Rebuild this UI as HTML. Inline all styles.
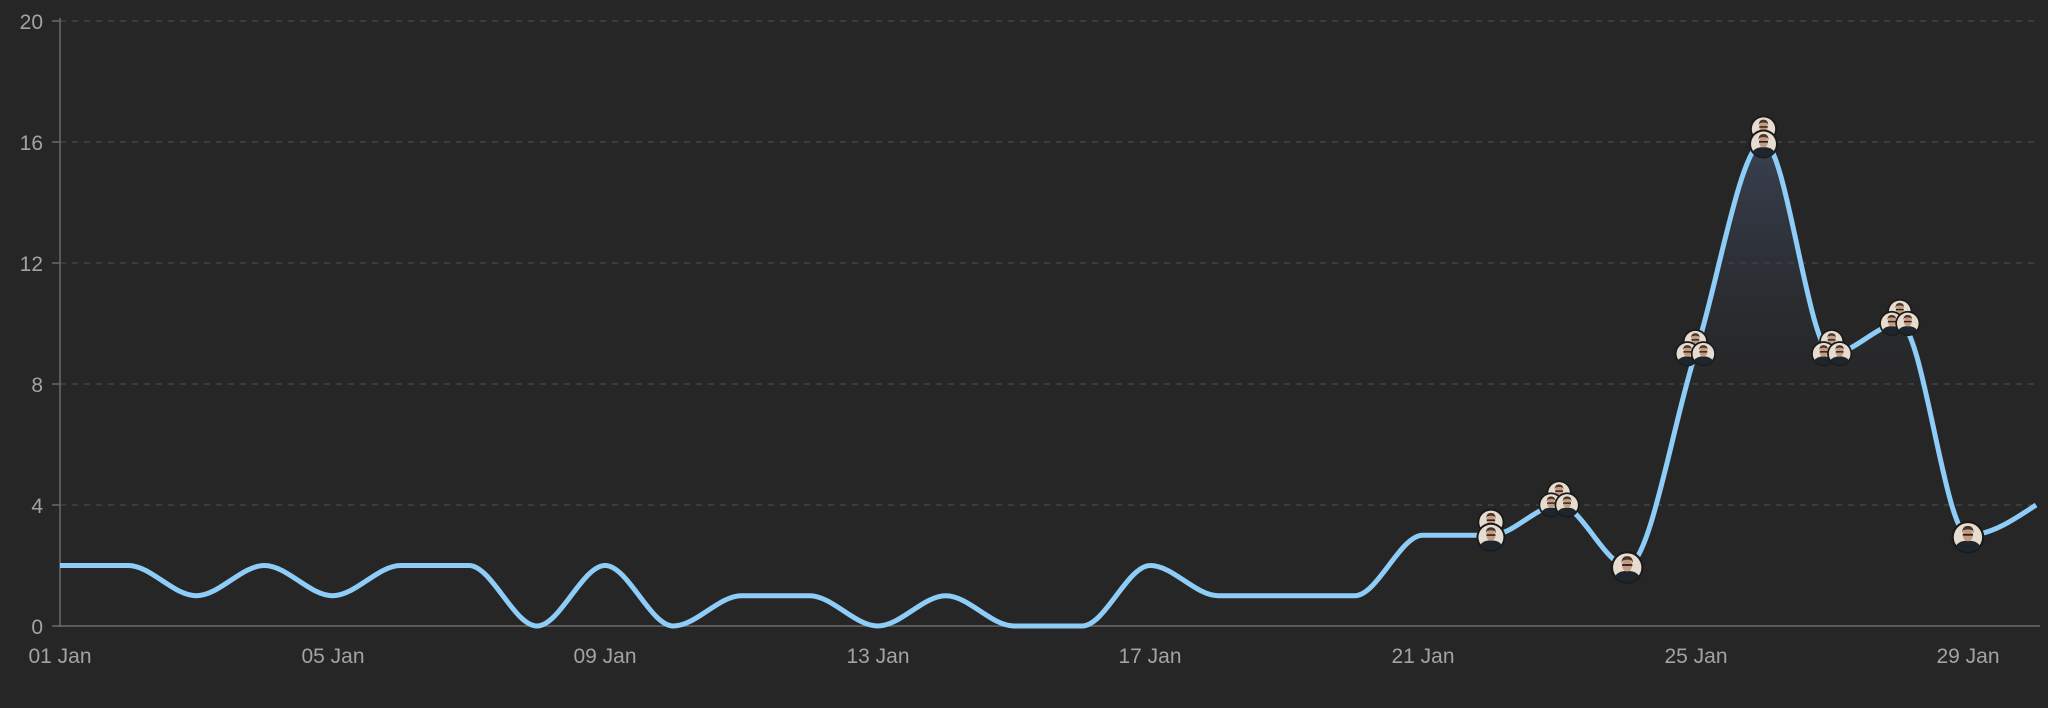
<!DOCTYPE html>
<html><head><meta charset="utf-8"><style>
html,body{margin:0;padding:0;background:#262626;width:2048px;height:708px;overflow:hidden}
svg{display:block}
text{font-family:"Liberation Sans",sans-serif;fill:#a3a3a3;font-size:21px}
</style></head><body>
<svg id="s" width="2048" height="708" viewBox="0 0 2048 708">
<defs>
<linearGradient id="g" x1="0" y1="140" x2="0" y2="420" gradientUnits="userSpaceOnUse">
<stop offset="0" stop-color="#3c4456" stop-opacity="0.9"/>
<stop offset="1" stop-color="#2a2d33" stop-opacity="0"/>
</linearGradient>
<symbol id="av" viewBox="-15 -15 30 30" overflow="visible">
<circle r="14.5" fill="#1a1a1a"/>
<circle r="12.5" fill="#e6ddd0"/>
<path d="M-11 8 Q-8 3 0 3 Q8 3 11 8 Q6 13 0 13 Q-6 13 -11 8Z" fill="#1e252d"/>
<ellipse cx="0" cy="-2" rx="4.5" ry="5.5" fill="#c49a80"/>
<path d="M-5 -4 Q-5 -10 0 -10 Q5 -10 5 -4 L4 -6 Q0 -8 -4 -6Z" fill="#4a3426"/>
<rect x="-4.5" y="-3" width="9" height="1.6" fill="#2a1e18"/>
</symbol>
</defs>
<g stroke="#4a4a4a" stroke-width="1.3" stroke-dasharray="6 6">
<line x1="60" y1="21" x2="2040" y2="21"/>
<line x1="60" y1="142" x2="2040" y2="142"/>
<line x1="60" y1="263" x2="2040" y2="263"/>
<line x1="60" y1="384" x2="2040" y2="384"/>
<line x1="60" y1="505" x2="2040" y2="505"/>
</g>
<line x1="60" y1="18" x2="60" y2="627" stroke="#6a6a6a" stroke-width="1.5"/>
<line x1="52" y1="626" x2="2040" y2="626" stroke="#6a6a6a" stroke-width="1.5"/>
<g stroke="#6a6a6a" stroke-width="1.5">
<line x1="52" y1="21" x2="60" y2="21"/><line x1="52" y1="142" x2="60" y2="142"/>
<line x1="52" y1="263" x2="60" y2="263"/><line x1="52" y1="384" x2="60" y2="384"/>
<line x1="52" y1="505" x2="60" y2="505"/>
</g>
<g text-anchor="end">
<text x="43" y="29">20</text><text x="43" y="150">16</text><text x="43" y="271">12</text>
<text x="43" y="392">8</text><text x="43" y="513">4</text><text x="43" y="634">0</text>
</g>
<g text-anchor="middle">
<text x="60" y="663">01 Jan</text><text x="333" y="663">05 Jan</text>
<text x="605" y="663">09 Jan</text><text x="878" y="663">13 Jan</text>
<text x="1150" y="663">17 Jan</text><text x="1423" y="663">21 Jan</text>
<text x="1696" y="663">25 Jan</text><text x="1968" y="663">29 Jan</text>
</g>
<path id="area" fill="url(#g)"/>
<path id="line" fill="none" stroke="#8ecdf7" stroke-width="5" stroke-linejoin="round"/>
<g id="avs"></g>
</svg>
<script>
var v=[2,2,1,2,1,2,2,0,2,0,1,1,0,1,0,0,2,1,1,1,3,3,4,2,9,16,9,10,3,4];
var X=function(i){return 60+i*68.14},Y=function(a){return 626-a*30.25};
var xs=v.map(function(_,i){return X(i)}),ys=v.map(Y),n=v.length;
var d=[],m=[];
for(var i=0;i<n-1;i++)d.push((ys[i+1]-ys[i])/(xs[i+1]-xs[i]));
for(i=1;i<n-1;i++){if(d[i-1]*d[i]<=0)m[i]=0;else{var p=(d[i-1]+d[i])/2;m[i]=(Math.sign(d[i-1])+Math.sign(d[i]))*Math.min(Math.abs(d[i-1]),Math.abs(d[i]),0.5*Math.abs(p));}}
m[0]=d[0]==0?0:(3*d[0]-m[1])/2;m[n-1]=(3*d[n-2]-m[n-2])/2;
var s="M"+xs[0]+","+ys[0];
for(i=0;i<n-1;i++){var dx=(xs[i+1]-xs[i])/3;s+="C"+(xs[i]+dx)+","+(ys[i]+m[i]*dx)+" "+(xs[i+1]-dx)+","+(ys[i+1]-m[i+1]*dx)+" "+xs[i+1]+","+ys[i+1];}
document.getElementById("line").setAttribute("d",s);
document.getElementById("area").setAttribute("d",s+"L"+xs[n-1]+",626L"+xs[0]+",626Z");
var g=document.getElementById("avs"),ns="http://www.w3.org/2000/svg";
function av(x,y,sz){var u=document.createElementNS(ns,"use");u.setAttribute("href","#av");u.setAttribute("x",x-sz/2);u.setAttribute("y",y-sz/2);u.setAttribute("width",sz);u.setAttribute("height",sz);g.appendChild(u);}
function cl(i,k){var x=X(i),y=Y(v[i]);
 if(k==1){av(x,y+2,34);}
 else if(k==2){av(x,y-13,28);av(x,y+2,30);}
 else{av(x,y-12,26);av(x-8,y,26);av(x+8,y,26);}}
cl(21,2);cl(22,3);cl(23,1);cl(24,3);cl(25,2);cl(26,3);cl(27,3);cl(28,1);
</script>
</body></html>
